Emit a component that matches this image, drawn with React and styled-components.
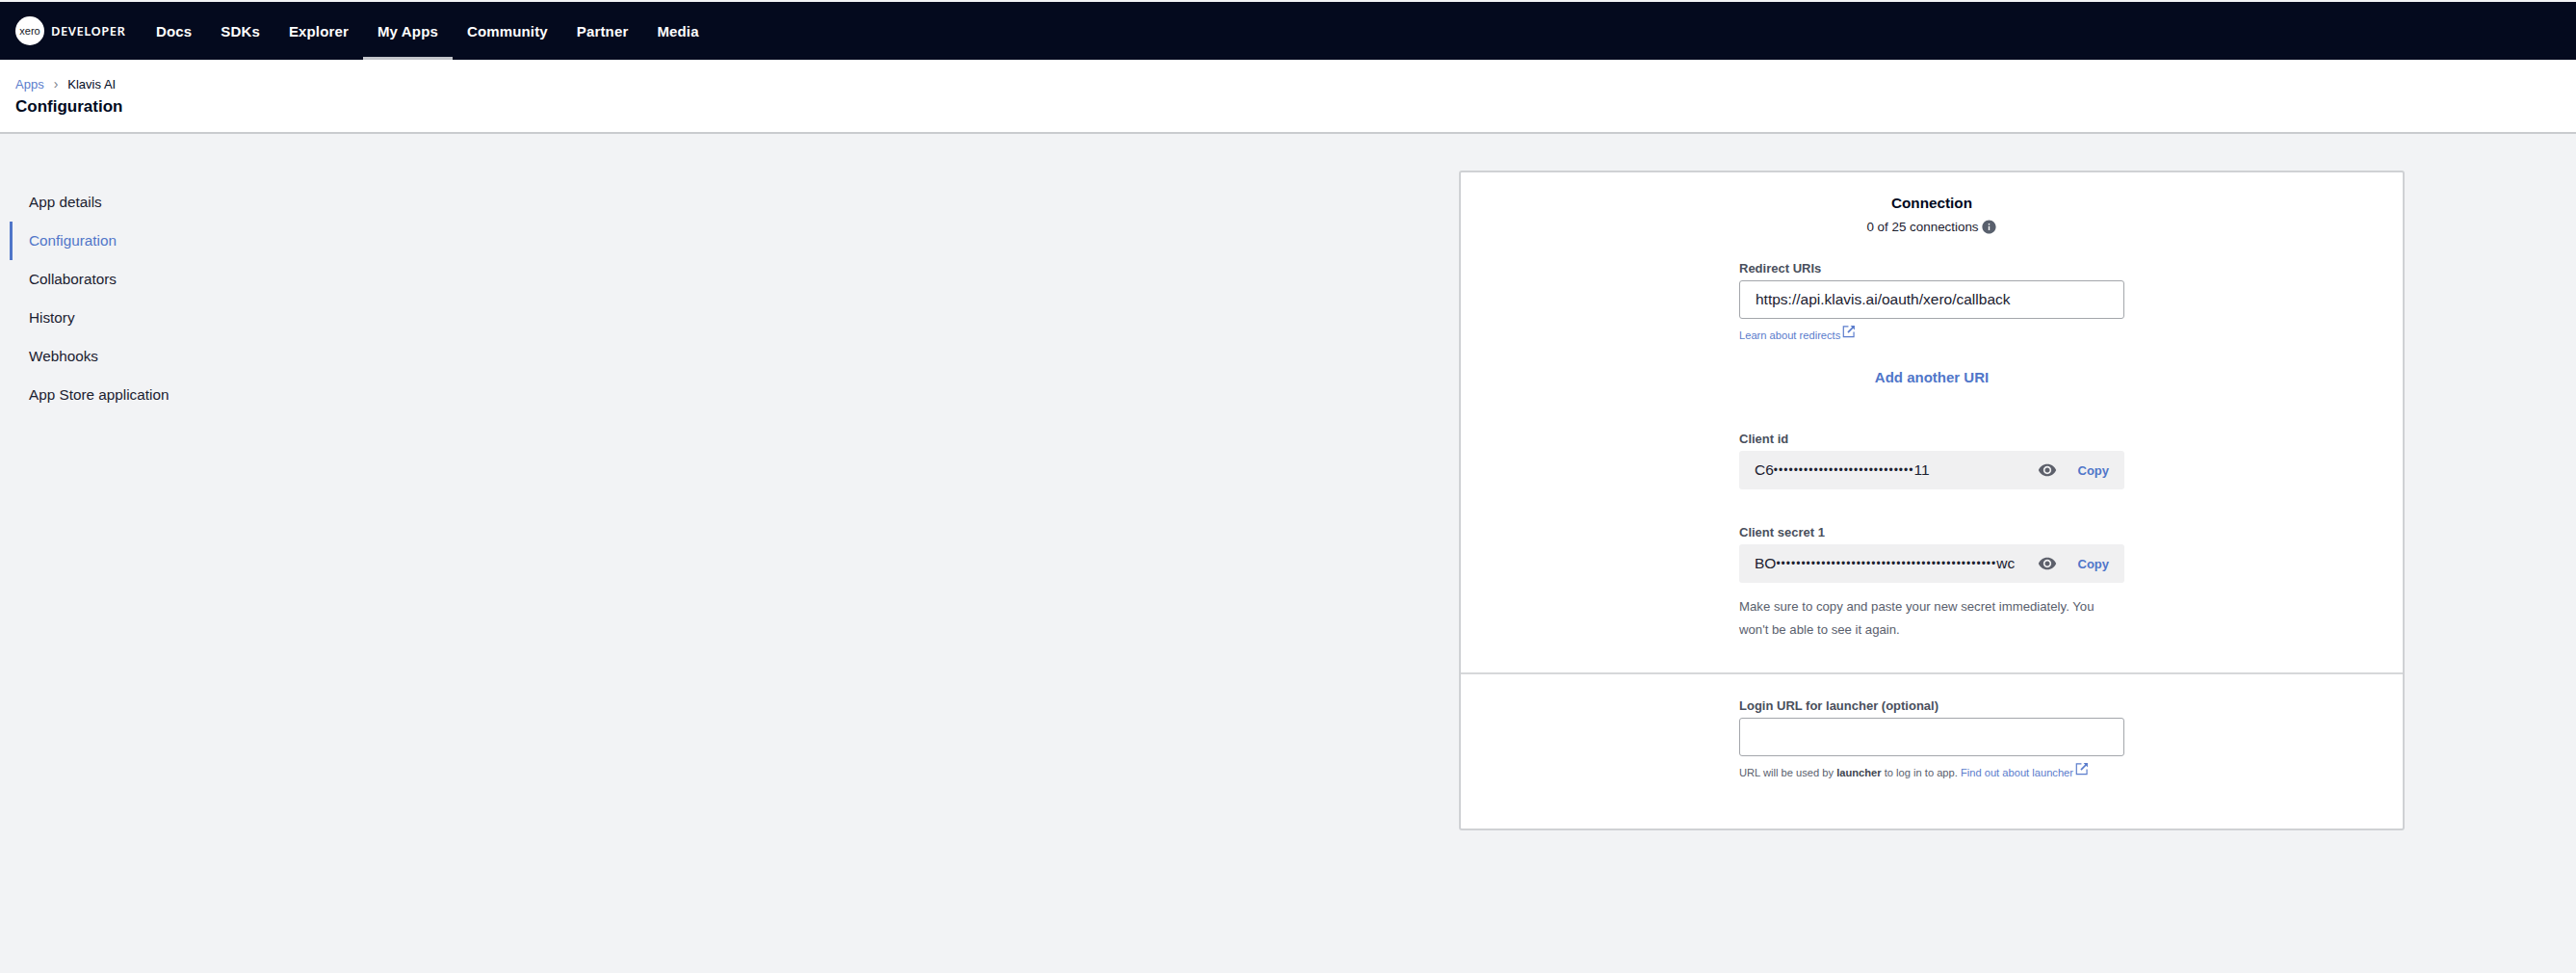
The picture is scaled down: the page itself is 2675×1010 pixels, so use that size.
import React from 'react'
import styled, { createGlobalStyle } from 'styled-components'
import { MdInfo, MdVisibility } from 'react-icons/md'

const GlobalStyle = createGlobalStyle`
  html, body {
    margin: 0;
    padding: 0;
    background: #f2f3f5;
    font-family: "Liberation Sans", Arial, sans-serif;
    color: #000a1e;
  }
  * {
    box-sizing: border-box;
  }
`

const Page = styled.div`
  min-height: 1010px;
  padding-top: 2px;
  background: #f2f3f5;
`

const TopBar = styled.header`
  display: flex;
  align-items: stretch;
  height: 60px;
  padding-left: 16px;
  background: #040a1e;
`

const Brand = styled.div`
  display: flex;
  align-items: center;
  gap: 7px;
  width: 131px;
`

const LogoCircle = styled.div`
  display: flex;
  align-items: center;
  justify-content: center;
  width: 30px;
  height: 30px;
  border-radius: 50%;
  background: #fff;
  color: #14181f;
  font-size: 11px;
`

const BrandText = styled.span`
  color: #fff;
  font-family: "Noto Sans", sans-serif;
  font-size: 13px;
  font-weight: 600;
  letter-spacing: 0.5px;
`

const NavItem = styled.a`
  display: flex;
  align-items: center;
  padding: ${(p) => (p.$active ? '3px' : '0')} 15px 0;
  height: 60px;
  color: #fff;
  font-size: 15px;
  font-weight: 700;
  letter-spacing: 0.15px;
  border-bottom: ${(p) => (p.$active ? '3px solid #c2c5ca' : 'none')};
`

const SubHeader = styled.div`
  height: 77px;
  padding: 17px 16px 0;
  background: #fff;
  border-bottom: 2px solid #c9cbce;
`

const Crumbs = styled.div`
  display: flex;
  align-items: center;
  height: 16px;
  font-size: 13px;
`

const CrumbLink = styled.a`
  color: #5a7ccc;
`

const CrumbSep = styled.span`
  margin: 0 10px;
  color: #7a7f8a;
  font-size: 14px;
`

const PageTitle = styled.h1`
  margin: 5px 0 0;
  font-size: 17px;
  line-height: 22px;
  font-weight: 700;
`

const Main = styled.main`
  display: grid;
  grid-template-columns: 1515px 982px;
  padding-top: 38px;
`

const SideNav = styled.nav`
  display: flex;
  flex-direction: column;
  padding: 13px 0 0 10px;
`

const SideLink = styled.a`
  display: flex;
  align-items: center;
  height: 40px;
  padding-left: 17px;
  font-size: 15.3px;
  color: ${(p) => (p.$active ? '#5076c9' : '#1b2130')};
  border-left: 3px solid ${(p) => (p.$active ? '#5076c9' : 'transparent')};
`

const Card = styled.section`
  height: 685px;
  background: #fff;
  border: 2px solid #cfd1d4;
  border-radius: 3px;
`

const CardSection = styled.div`
  display: flex;
  flex-direction: column;
  width: 400px;
  margin: 0 auto;
`

const TopSection = styled.div`
  height: 521px;
  padding-top: 22px;
  border-bottom: 2px solid #d6d8da;
`

const BottomSection = styled.div`
  padding-top: 25px;
`

const CardTitle = styled.h2`
  margin: 0;
  height: 20px;
  font-size: 15.3px;
  line-height: 20px;
  font-weight: 700;
  text-align: center;
`

const ConnectionCount = styled.div`
  display: flex;
  align-items: center;
  justify-content: center;
  gap: 2px;
  margin-top: 4px;
  height: 20px;
  font-size: 13.4px;
  color: #1b2130;
  svg {
    color: #59606d;
  }
`

const FieldLabel = styled.label`
  display: block;
  height: 16px;
  margin-top: ${(p) => p.$top}px;
  margin-bottom: 4px;
  font-size: 13px;
  line-height: 16px;
  font-weight: 700;
  color: #494f5c;
`

const TextInput = styled.input`
  display: block;
  width: 100%;
  height: 40px;
  padding: 0 16px;
  border: 1px solid #a3a6ab;
  border-radius: 3px;
  background: #fff;
  color: #1b2130;
  font-family: inherit;
  font-size: 15.5px;
  outline: none;
`

const Hint = styled.div`
  margin-top: 6px;
  height: 14px;
  font-size: 11.15px;
  line-height: 14px;
  color: #59606d;
  white-space: nowrap;
  b {
    color: #41464f;
  }
`

const HintLink = styled.a`
  color: #5a7ccc;
`

const ExternalIcon = styled.svg`
  width: 14px;
  height: 14px;
  margin-left: 2px;
  vertical-align: 1px;
`

const AddLink = styled.a`
  display: block;
  margin-top: 31px;
  height: 20px;
  font-size: 15px;
  line-height: 20px;
  font-weight: 700;
  text-align: center;
  color: #5076c9;
`

const SecretField = styled.div`
  display: flex;
  align-items: center;
  height: 40px;
  padding: 0 16px;
  border-radius: 3px;
  background: #f0f0f1;
`

const SecretValue = styled.span`
  flex: 1;
  font-size: 15.5px;
  color: #1b2130;
  white-space: nowrap;
`

const SecretDots = styled.span`
  font-size: 12px;
  letter-spacing: 1px;
  vertical-align: 1px;
`

const EyeIcon = styled(MdVisibility)`
  color: #5d606b;
  margin-right: 22px;
`

const CopyLink = styled.a`
  font-size: 13px;
  font-weight: 700;
  color: #5076c9;
`

const Note = styled.p`
  margin: 13px 0 0;
  max-width: 385px;
  font-size: 13.2px;
  line-height: 24px;
  color: #59606d;
`

const External = ({ color }) => (
  <ExternalIcon viewBox="0 0 13 13" fill="none" stroke={color} strokeWidth="1.1">
    <path d="M6 1.8H1.2v10h10V7" />
    <path d="M5.5 7.5L11 2" strokeWidth="1.5" />
    <path d="M8 1h4v4z" fill={color} stroke="none" />
  </ExternalIcon>
)

const sideLinks = ['App details', 'Configuration', 'Collaborators', 'History', 'Webhooks', 'App Store application']
const navLinks = ['Docs', 'SDKs', 'Explorer', 'My Apps', 'Community', 'Partner', 'Media']

export default function App() {
  return (
    <Page>
      <GlobalStyle />
      <TopBar>
        <Brand>
          <LogoCircle>xero</LogoCircle>
          <BrandText>DEVELOPER</BrandText>
        </Brand>
        {navLinks.map((item) => (
          <NavItem key={item} $active={item === 'My Apps'}>
            {item}
          </NavItem>
        ))}
      </TopBar>
      <SubHeader>
        <Crumbs>
          <CrumbLink>Apps</CrumbLink>
          <CrumbSep>›</CrumbSep>
          <span>Klavis AI</span>
        </Crumbs>
        <PageTitle>Configuration</PageTitle>
      </SubHeader>
      <Main>
        <SideNav>
          {sideLinks.map((item) => (
            <SideLink key={item} $active={item === 'Configuration'}>
              {item}
            </SideLink>
          ))}
        </SideNav>
        <Card>
          <TopSection>
            <CardSection>
              <CardTitle>Connection</CardTitle>
              <ConnectionCount>
                0 of 25 connections <MdInfo size={17} />
              </ConnectionCount>
              <FieldLabel $top={26}>Redirect URIs</FieldLabel>
              <TextInput readOnly value="https://api.klavis.ai/oauth/xero/callback" />
              <Hint>
                <HintLink>Learn about redirects</HintLink>
                <External color="#5a7ccc" />
              </Hint>
              <AddLink>Add another URI</AddLink>
              <FieldLabel $top={46}>Client id</FieldLabel>
              <SecretField>
                <SecretValue>
                  C6<SecretDots>••••••••••••••••••••••••••••</SecretDots>11
                </SecretValue>
                <EyeIcon size={20} />
                <CopyLink>Copy</CopyLink>
              </SecretField>
              <FieldLabel $top={37}>Client secret 1</FieldLabel>
              <SecretField>
                <SecretValue>
                  BO<SecretDots>••••••••••••••••••••••••••••••••••••••••••••</SecretDots>wc
                </SecretValue>
                <EyeIcon size={20} />
                <CopyLink>Copy</CopyLink>
              </SecretField>
              <Note>Make sure to copy and paste your new secret immediately. You won't be able to see it again.</Note>
            </CardSection>
          </TopSection>
          <BottomSection>
            <CardSection>
              <FieldLabel $top={0}>Login URL for launcher (optional)</FieldLabel>
              <TextInput readOnly value="" />
              <Hint>
                URL will be used by <b>launcher</b> to log in to app. <HintLink>Find out about launcher</HintLink>
                <External color="#5a7ccc" />
              </Hint>
            </CardSection>
          </BottomSection>
        </Card>
      </Main>
    </Page>
  )
}
